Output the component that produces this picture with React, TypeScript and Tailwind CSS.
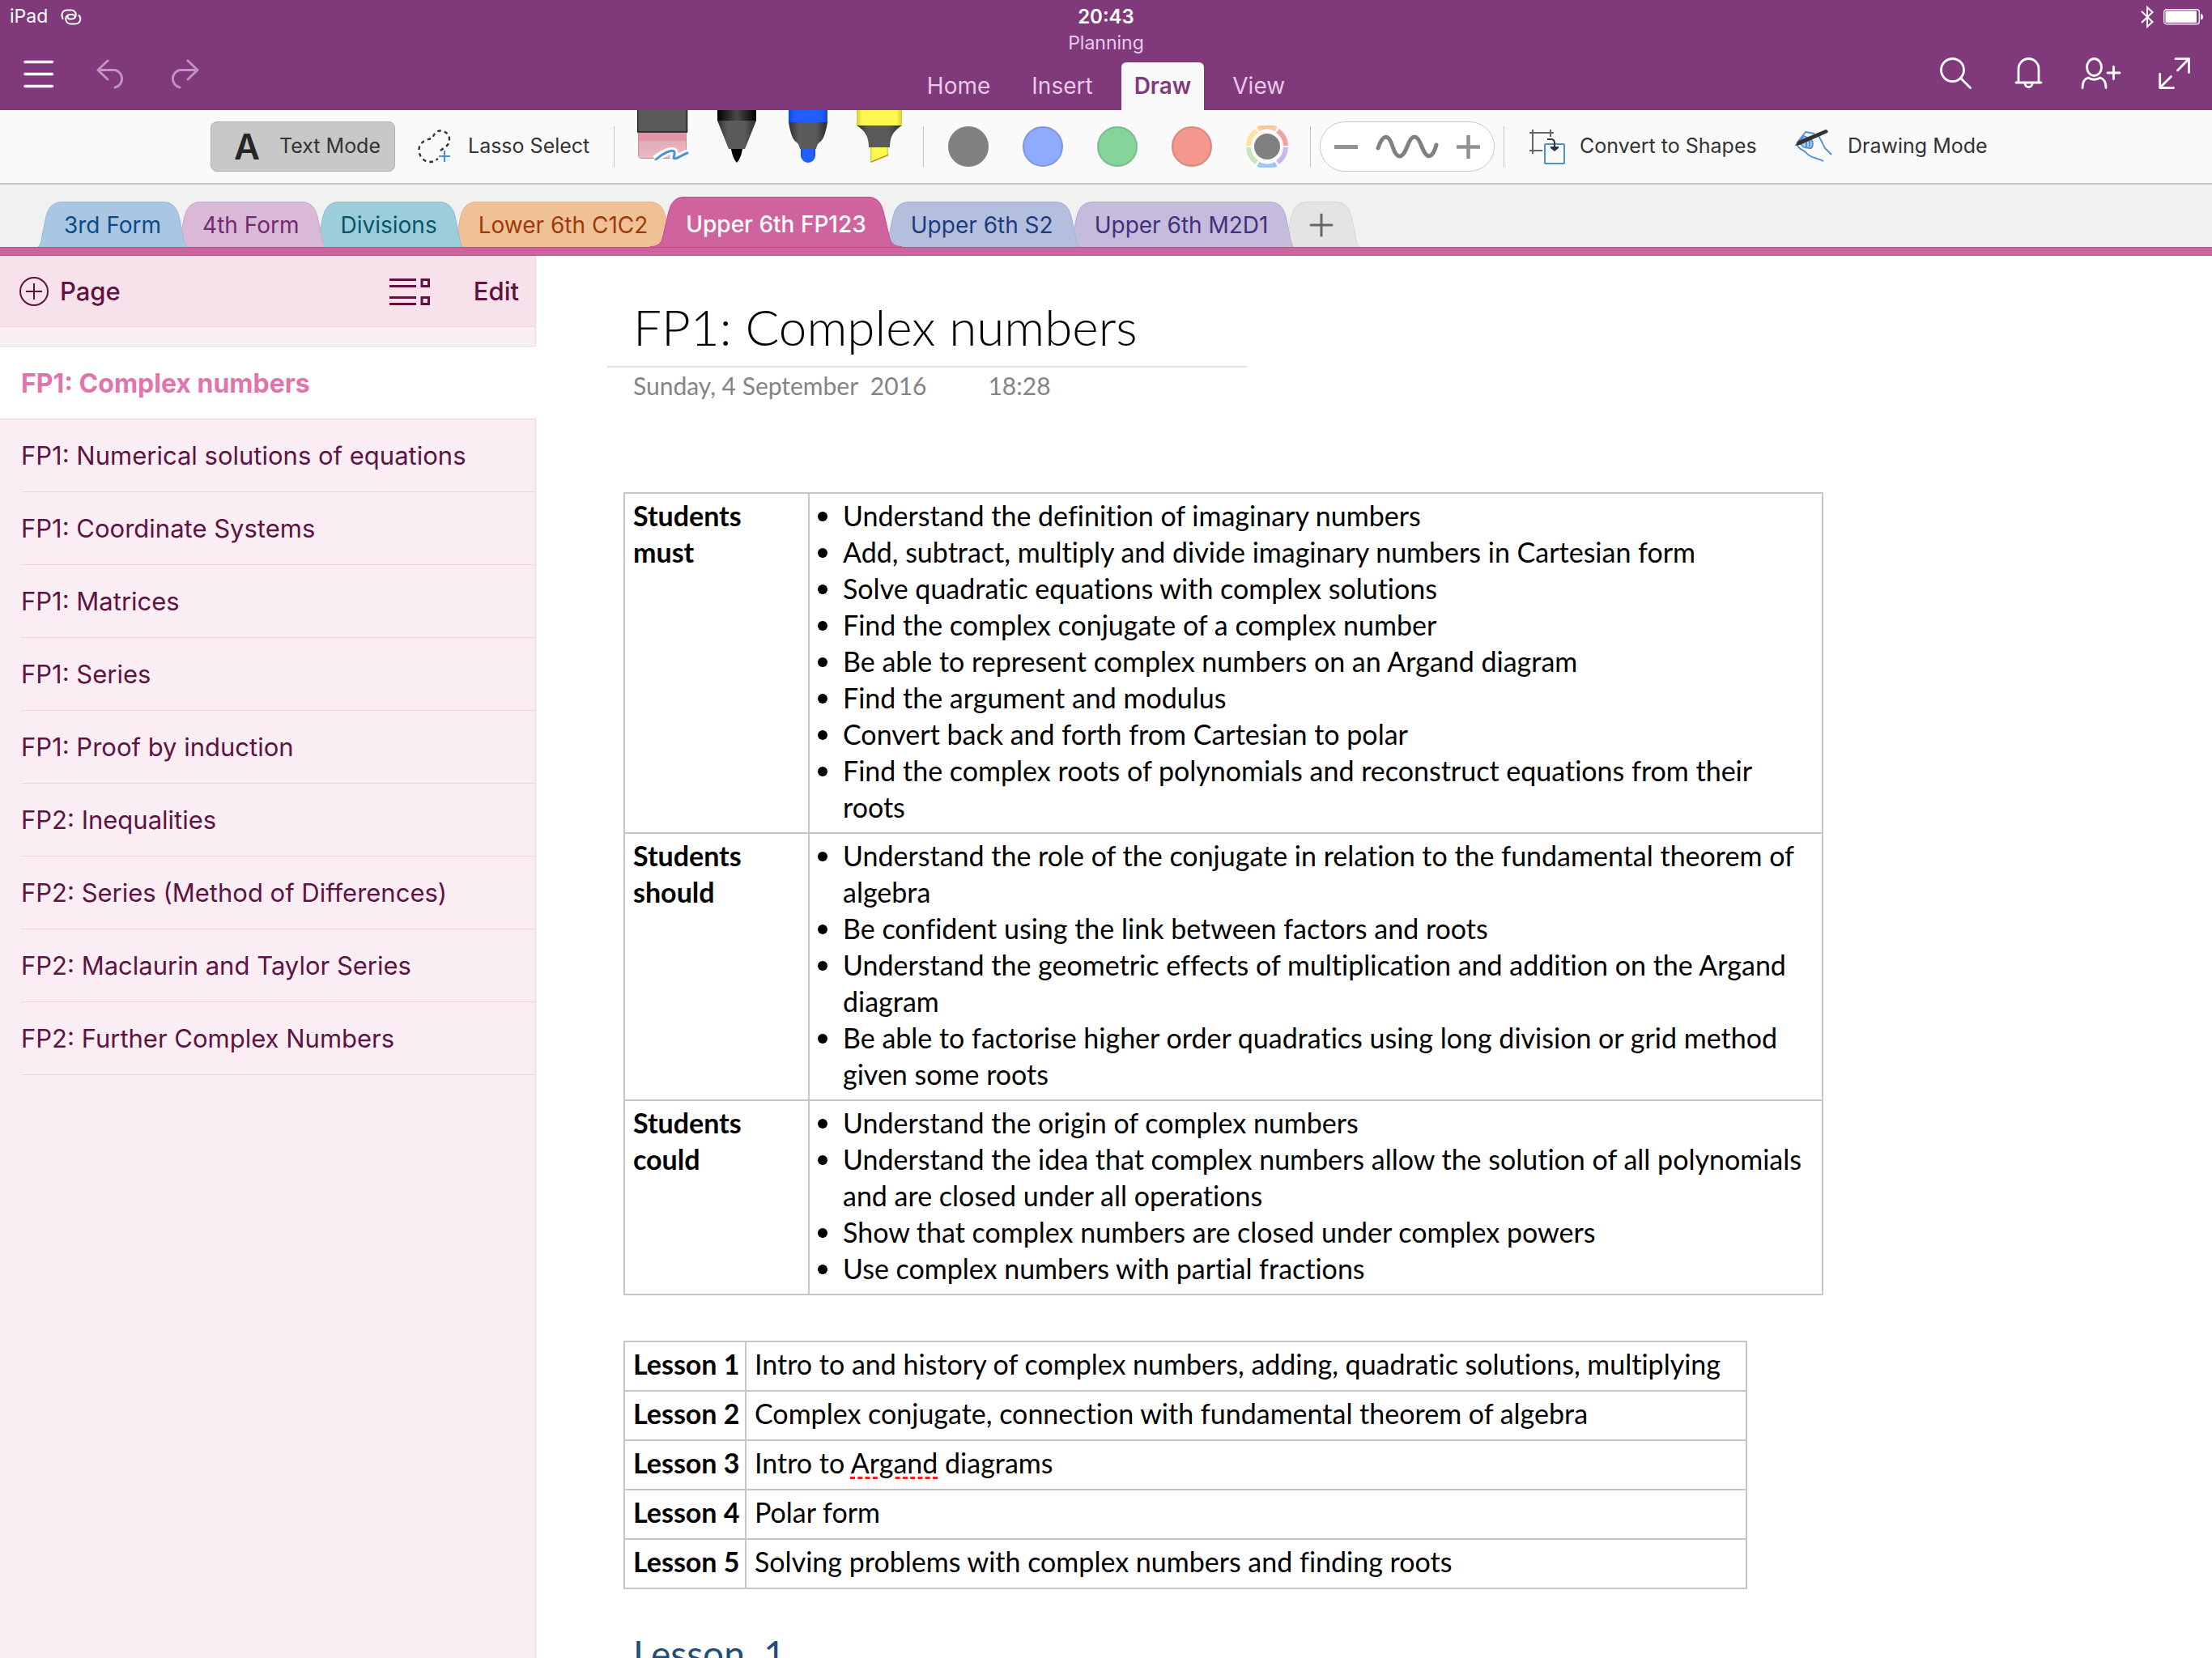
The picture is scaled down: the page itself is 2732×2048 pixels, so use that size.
import React from "react";

const pages = [
  "FP1: Complex numbers",
  "FP1: Numerical solutions of equations",
  "FP1: Coordinate Systems",
  "FP1: Matrices",
  "FP1: Series",
  "FP1: Proof by induction",
  "FP2: Inequalities",
  "FP2: Series (Method of Differences)",
  "FP2: Maclaurin and Taylor Series",
  "FP2: Further Complex Numbers",
];

const objectives = [
  {
    who: "Students must",
    items: [
      "Understand the definition of imaginary numbers",
      "Add, subtract, multiply and divide imaginary numbers in Cartesian form",
      "Solve quadratic equations with complex solutions",
      "Find the complex conjugate of a complex number",
      "Be able to represent complex numbers on an Argand diagram",
      "Find the argument and modulus",
      "Convert back and forth from Cartesian to polar",
      "Find the complex roots of polynomials and reconstruct equations from their roots",
    ],
  },
  {
    who: "Students should",
    items: [
      "Understand the role of the conjugate in relation to the fundamental theorem of algebra",
      "Be confident using the link between factors and roots",
      "Understand the geometric effects of multiplication and addition on the Argand diagram",
      "Be able to factorise higher order quadratics using long division or grid method given some roots",
    ],
  },
  {
    who: "Students could",
    items: [
      "Understand the origin of complex numbers",
      "Understand the idea that complex numbers allow the solution of all polynomials and are closed under all operations",
      "Show that complex numbers are closed under complex powers",
      "Use complex numbers with partial fractions",
    ],
  },
];

const lessons: React.ReactNode[] = [
  "Intro to and history of complex numbers, adding, quadratic solutions, multiplying",
  "Complex conjugate, connection with fundamental theorem of algebra",
  <>
    Intro to{" "}
    <span className="underline decoration-dashed decoration-[#ff1a1a] decoration-[3px] underline-offset-[4px]">Argand</span>{" "}
    diagrams
  </>,
  "Polar form",
  "Solving problems with complex numbers and finding roots",
];

const sections = [
  { name: "3rd Form", body: "bg-[#a9c6e3] border-[#97bde0]", cap: "fill-[#a9c6e3] stroke-[#97bde0]", text: "text-[#0d4a87]", z: "z-[9]" },
  { name: "4th Form", body: "bg-[#d9b8d8] border-[#cfa6ce]", cap: "fill-[#d9b8d8] stroke-[#cfa6ce]", text: "text-[#722a72]", z: "z-[8]" },
  { name: "Divisions", body: "bg-[#9ccdda] border-[#86c2d1]", cap: "fill-[#9ccdda] stroke-[#86c2d1]", text: "text-[#06566b]", z: "z-[7]" },
  { name: "Lower 6th C1C2", body: "bg-[#f0c197] border-[#ebb27e]", cap: "fill-[#f0c197] stroke-[#ebb27e]", text: "text-[#9c3b08]", z: "z-[6]" },
  { name: "Upper 6th FP123", active: true, body: "bg-[#cf639d] border-[#c44a8c]", cap: "fill-[#cf639d] stroke-[#c44a8c]", text: "text-white font-medium", z: "z-20" },
  { name: "Upper 6th S2", body: "bg-[#b4bfde] border-[#a3b3d9]", cap: "fill-[#b4bfde] stroke-[#a3b3d9]", text: "text-[#1f3b7d]", z: "z-[4]" },
  { name: "Upper 6th M2D1", body: "bg-[#c4bbdd] border-[#b7acd7]", cap: "fill-[#c4bbdd] stroke-[#b7acd7]", text: "text-[#432f7a]", z: "z-[3]" },
];

function Cap({ cls, flip, active }: { cls: string; flip?: boolean; active?: boolean }) {
  const side = flip ? "-scale-x-100" : "";
  return active ? (
    <svg viewBox="0 0 44 62" className={`h-[62px] w-11 shrink-0 ${side} ${cls}`} aria-hidden="true">
      <path d="M0 62 C10 62 14 58 16 48 L23 18 Q27 0 42 0 H44 V62 Z" stroke="none" />
      <path d="M0 61.5 C10 61.5 14 58 16 48 L23 18 Q27 0.5 42 0.5 H44" fill="none" />
    </svg>
  ) : (
    <svg viewBox="0 0 32 56" className={`h-14 w-8 shrink-0 ${side} ${cls}`} aria-hidden="true">
      <path d="M0 56 C3 54 4 48 5 42 L10 18 Q14 0 30 0 H32 V56 Z" stroke="none" />
      <path d="M0 56 C3 54 4 48 5 42 L10 18 Q14 0.5 30 0.5 H32" fill="none" />
    </svg>
  );
}

function Divider() {
  return <div className="h-[50px] w-px shrink-0 bg-[#c4c4c4]" />;
}

const swatches = [
  { name: "Grey", cls: "bg-[#808080] border-[#808080]" },
  { name: "Blue", cls: "bg-[#8eabfd] border-[#7f98dd]" },
  { name: "Green", cls: "bg-[#86d499] border-[#78bd89]" },
  { name: "Red", cls: "bg-[#f4978c] border-[#d8877e]" },
];

function Header() {
  return (
    <header className="grid h-[136px] shrink-0 grid-cols-[1fr_auto_1fr] bg-[#80397b] text-white">
      <div>
        <div className="flex h-10 items-center gap-4 pt-px pl-3 text-[23px]">
          <span>iPad</span>
          <svg viewBox="0 0 26 20" className="h-5 w-[26px]" fill="none" stroke="currentColor" strokeWidth="2" strokeLinecap="round" aria-hidden="true">
            <path d="M2.500 12 C0 7 2 1.500 8 1.500 H13 C20 1.500 21 12.500 13.500 12.500 H11 C9 12.500 8 10.500 9 8.500" />
            <path d="M22.500 8 C26 12 24 18.500 18 18.500 H12 C5 18.500 4 7 11.500 7 H14 C17 7 18 9 17 11" />
          </svg>
        </div>
        <div className="flex h-24 items-center gap-[52px] pt-2 pl-[29px]">
          <button aria-label="Notebooks">
            <svg viewBox="0 0 38 36" className="h-9 w-[38px]" stroke="currentColor" strokeWidth="3.4" strokeLinecap="round">
              <path d="M2 2.500H35.500M2 17.500H35.500M2 32.500H35.500" />
            </svg>
          </button>
          <button aria-label="Undo" className="text-[#bf95bb]">
            <svg viewBox="0 2 38 38" className="h-[38px] w-[38px]" fill="none" stroke="currentColor" strokeWidth="3" strokeLinecap="round" strokeLinejoin="round">
              <path d="M14 4 L2 15.500 L14 27 M2 15.500 H23 A11 11 0 0 1 23 37" />
            </svg>
          </button>
          <button aria-label="Redo" className="text-[#bf95bb]">
            <svg viewBox="0 2 38 38" className="h-[38px] w-[38px]" fill="none" stroke="currentColor" strokeWidth="3" strokeLinecap="round" strokeLinejoin="round">
              <path d="M23 4 L35 15.500 L23 27 M35 15.500 H13 A11 11 0 0 0 13 37" />
            </svg>
          </button>
        </div>
      </div>

      <div className="flex flex-col items-center">
        <div className="flex h-10 items-center pt-px text-2xl font-semibold">20:43</div>
        <div className="h-[37px] text-[23px] leading-[26px] text-[#eac9e8]">Planning</div>
        <nav className="flex h-[59px] gap-[19px] text-[28px] text-[#eac9e8]">
          <button className="px-4 pb-[2px]">Home</button>
          <button className="px-4 pb-[2px]">Insert</button>
          <button className="rounded-t-md bg-[#fafafa] px-4 pb-[2px] font-semibold text-[#80397b]">Draw</button>
          <button className="px-4 pb-[2px]">View</button>
        </nav>
      </div>

      <div>
        <div className="flex h-10 items-center justify-end gap-3 pt-px pr-[10px]">
          <svg viewBox="0 0 16 28" className="h-7 w-4" fill="none" stroke="currentColor" strokeWidth="2" aria-label="Bluetooth">
            <path d="M1 7 L14.500 20 L8 26 V2 L14.500 8 L1 21" />
          </svg>
          <svg viewBox="0 0 50 20" className="h-5 w-[50px]" aria-label="Battery">
            <rect x="0.750" y="0.750" width="43.500" height="18" rx="3" fill="none" stroke="currentColor" strokeWidth="1.300" />
            <rect x="2.500" y="2.500" width="38.500" height="14.500" rx="1" fill="currentColor" />
            <path d="M46 6 Q49 6.500 49 10 Q49 13 46 13.500 Z" fill="currentColor" />
          </svg>
        </div>
        <div className="flex h-24 items-center justify-end gap-10 pt-1 pr-[22px]">
          <button aria-label="Search" className="flex w-[50px] justify-center">
            <svg viewBox="0 0 39 39" className="h-[39px] w-[39px]" fill="none" stroke="currentColor" strokeWidth="2.800" strokeLinecap="round">
              <circle cx="15.500" cy="15.500" r="14" />
              <path d="M25.500 25.500 L37.500 37.500" />
            </svg>
          </button>
          <button aria-label="Notifications" className="flex w-[50px] justify-center">
            <svg viewBox="0 0 35 39" className="h-[39px] w-[35px]" fill="none" stroke="currentColor" strokeWidth="2.800" strokeLinecap="round">
              <path d="M2 31 H33 M5 31 V14 A12.500 12.500 0 0 1 30 14 V31 M13 32 A4.500 4.500 0 0 0 22 32" />
            </svg>
          </button>
          <button aria-label="Share" className="flex w-[50px] justify-center">
            <svg viewBox="0 0 50 39" className="h-[39px] w-[50px]" fill="none" stroke="currentColor" strokeWidth="2.800" strokeLinecap="round" strokeLinejoin="round">
              <ellipse cx="16.500" cy="12" rx="9" ry="10.500" />
              <path d="M2 37.500 C2 28 6 26 9 25 Q16.500 29.500 24 25 C27 26 31 28 31 37.500 M33 19 H48 M40.500 11.500 V26.500" />
            </svg>
          </button>
          <button aria-label="Full screen" className="flex w-[50px] justify-center">
            <svg viewBox="0 0 39 39" className="h-[39px] w-[39px]" fill="none" stroke="currentColor" strokeWidth="2.800" strokeLinecap="round" strokeLinejoin="round">
              <path d="M21 1.700 H37.500 V18.500 M37 2 L23.500 16 M1.700 20.500 V37.500 H18.500 M2 37 L15.500 23.500" />
            </svg>
          </button>
        </div>
      </div>
    </header>
  );
}

function Pens() {
  return (
    <div className="flex w-[381px] shrink-0 items-start self-stretch pl-7">
      <svg width="0" height="0" className="absolute" aria-hidden="true">
        <defs>
          <linearGradient id="barrel">
            <stop offset="0" stopColor="#000" />
            <stop offset="0.500" stopColor="#4a4a4a" />
            <stop offset="1" stopColor="#000" />
          </linearGradient>
          <linearGradient id="cone">
            <stop offset="0" stopColor="#2e2e2e" />
            <stop offset="0.250" stopColor="#5a5a5a" />
            <stop offset="0.700" stopColor="#5a5a5a" />
            <stop offset="1" stopColor="#2a2a2a" />
          </linearGradient>
          <linearGradient id="blueInk">
            <stop offset="0" stopColor="#1247d0" />
            <stop offset="0.150" stopColor="#1f5fff" />
            <stop offset="0.850" stopColor="#1f5fff" />
            <stop offset="1" stopColor="#1247d0" />
          </linearGradient>
          <linearGradient id="yellowInk">
            <stop offset="0" stopColor="#d3cb37" />
            <stop offset="0.120" stopColor="#fff851" />
            <stop offset="0.880" stopColor="#fff851" />
            <stop offset="1" stopColor="#d3cb37" />
          </linearGradient>
          <linearGradient id="rubber" x1="0" y1="0" x2="0" y2="1">
            <stop offset="0" stopColor="#e3a3b2" />
            <stop offset="1" stopColor="#e9bac7" />
          </linearGradient>
        </defs>
      </svg>
      <button aria-label="Eraser">
        <svg viewBox="0 0 64 66" className="h-[66px] w-16">
          <path d="M1.500 27 H60.500 V56 Q60.500 59.500 57 59.500 H5 Q1.500 59.500 1.500 55 Z" fill="url(#rubber)" stroke="#c98e9d" />
          <path d="M2 27 H60 V38 H2 Z" fill="#e195a7" />
          <rect x="0.500" y="-2" width="61" height="29" fill="#595959" stroke="#1e1e1e" strokeWidth="1.500" />
          <path d="M22 60.500 C32 53 45 47 46 52 C47 57 42 61 48 59 C53 58 56 55 62 53" fill="none" stroke="#fafafa" strokeWidth="9" />
          <path d="M23 61 C32 53 45 47 46 52 C47 57 42 61 48 59.500 C53 58 56 55 62 53" fill="none" stroke="#4b8fd4" strokeWidth="3" strokeLinecap="round" />
        </svg>
      </button>
      <button aria-label="Pen" className="ml-[35px]">
        <svg viewBox="0 0 48 66" className="h-[66px] w-12">
          <rect width="48" height="13" fill="url(#barrel)" />
          <path d="M0 13 H48 L34 48 H14 Z" fill="url(#cone)" />
          <path d="M17 48 H31 Q29 60 24 65 Q19 60 17 48 Z" fill="#000" />
        </svg>
      </button>
      <button aria-label="Marker" className="ml-10">
        <svg viewBox="0 0 48 66" className="h-[66px] w-12">
          <rect width="48" height="15" fill="url(#blueInk)" />
          <path d="M15 48 H33 V56 A9 9 0 0 1 15 56 Z" fill="url(#blueInk)" />
          <path d="M0 15 H48 C46 28 43 37 38 40 Q35 42 34 48 H14 Q13 42 10 40 C5 37 2 28 0 15 Z" fill="url(#cone)" />
        </svg>
      </button>
      <button aria-label="Highlighter" className="ml-9">
        <svg viewBox="0 0 56 66" className="h-[66px] w-14">
          <rect width="56" height="19" fill="url(#yellowInk)" />
          <path d="M17 46 H39 V56 L17 65 Z" fill="url(#yellowInk)" />
          <path d="M18 64 L39 55.500" stroke="#a39d2b" strokeWidth="1.500" />
          <path d="M0 19 H56 C44 26 41 35 41 46 H15 C15 35 12 26 0 19 Z" fill="url(#cone)" />
        </svg>
      </button>
    </div>
  );
}

function Ribbon() {
  return (
    <div className="flex h-[92px] shrink-0 items-center justify-center border-b-2 border-[#c8c8c8] bg-[#fafafa] text-[25px] text-[#333]">
      <button className="flex h-[62px] w-[228px] shrink-0 items-center rounded-lg border border-[#b0b0b0] bg-[#c8c8c8] pl-7">
        <span className="w-[56px] text-left text-[44px] leading-none font-semibold text-[#262626]">A</span>
        Text Mode
      </button>
      <button className="flex h-[62px] w-[270px] shrink-0 items-center gap-5 pl-7">
        <svg viewBox="0 0 42 42" className="h-[42px] w-[42px]" fill="none">
          <path
            d="M28 26 C34 21 39 20 39 12 C39 5 33 1.500 28 1.500 C22 1.500 20 6 18 11 C10 12 1.500 16 1.500 25 C1.500 33 7 40 15 40 C20 40 22 38 25 36"
            stroke="#333"
            strokeWidth="2.400"
            strokeDasharray="4.500 4.200"
          />
          <path d="M33 26 V40 M26 33 H40" stroke="#4b8fd4" strokeWidth="2.200" />
        </svg>
        Lasso Select
      </button>
      <Divider />
      <Pens />
      <Divider />
      <div className="flex w-[477px] shrink-0 items-center gap-[42px] pl-[30px]">
        {swatches.map((s) => (
          <button key={s.name} aria-label={s.name} className={`h-[50px] w-[50px] rounded-full border-2 ${s.cls}`} />
        ))}
        <button aria-label="More colours">
          <svg viewBox="0 0 52 52" className="h-[52px] w-[52px]" fill="none" strokeWidth="6">
            <path d="M14.900 4.400 A23 23 0 0 1 37.100 4.400" stroke="#fdc79a" />
            <path d="M39 6.500 A23.300 23.300 0 0 1 49 25" stroke="#f4a0a0" />
            <path d="M49 27 A23.300 23.300 0 0 1 39 45.500" stroke="#c8b6ee" />
            <path d="M37.100 47.600 A23 23 0 0 1 14.900 47.600" stroke="#9cc6f3" />
            <path d="M13 45.500 A23.300 23.300 0 0 1 3 27" stroke="#c8e4b8" />
            <path d="M3 25 A23.300 23.300 0 0 1 13 6.500" stroke="#fde49c" />
            <circle cx="26" cy="26" r="16" fill="#808080" />
          </svg>
        </button>
      </div>
      <Divider />
      <div className="mx-[11px] flex h-[62px] w-[216px] shrink-0 items-center justify-between rounded-full border border-[#c8c8c8] bg-white px-[17px] text-[#808080]">
        <button aria-label="Thinner">
          <svg viewBox="0 0 29 29" className="h-[29px] w-[29px]" stroke="#919191" strokeWidth="5">
            <path d="M0 14.500 H29" />
          </svg>
        </button>
        <svg viewBox="0 0 78 30" className="h-[30px] w-[78px]" fill="none" stroke="currentColor" strokeWidth="5" strokeLinecap="round">
          <path d="M3 17 C9 -1 16 -1 21 15 S33 31 39 15 S51 -1 57 15 S70 31 75 13" />
        </svg>
        <button aria-label="Thicker">
          <svg viewBox="0 0 29 29" className="h-[29px] w-[29px]" stroke="#919191" strokeWidth="4.500">
            <path d="M0 14.500 H29 M14.500 0 V29" />
          </svg>
        </button>
      </div>
      <Divider />
      <button className="flex h-[62px] w-[342px] shrink-0 items-center gap-[18px] pl-[30px]">
        <svg viewBox="0 0 45 45" className="h-[45px] w-[45px]" fill="none">
          <path d="M5 1 V31 M1 5 H31 M27 1 V10 M1 27 H17" stroke="#666" strokeWidth="2" />
          <rect x="20" y="19" width="24" height="24" rx="1" stroke="#4b8fd4" strokeWidth="2" />
          <path d="M23 13 H28 Q32 13 32 18 V24" stroke="#333" strokeWidth="2" />
          <path d="M27 22 H37 V24 L32 28 L27 24 Z" fill="#333" />
        </svg>
        Convert to Shapes
      </button>
      <button className="flex h-[62px] w-[272px] shrink-0 items-center gap-[18px] pl-4">
        <svg viewBox="0 0 48 48" className="h-12 w-12" fill="none" stroke="#4b8fd4" strokeWidth="1.800" strokeLinejoin="round">
          <path d="M3 20 L14 6 L25 8 M29 10 C33 14 36 23 38 26 L46 34" />
          <path d="M4 22 C5 28 11 27 15 32 C20 38 28 38 36 42" />
          <path d="M7 17 C8 25 14 26 21 26 Q25 22 21 15 L12 11 Z" fill="#a9cdf2" />
          <path d="M15 25 V16 M19 24 V17" />
          <path d="M1 23 L5 17 L39 3 Q43 4 41 7 L7 22 Z" fill="#333" stroke="none" />
        </svg>
        Drawing Mode
      </button>
    </div>
  );
}

function SectionTabs() {
  return (
    <div className="shrink-0 bg-[#f1f1f1]">
      <div className="flex h-[77px] items-end pl-[47px]">
        {sections.map((s) => (
          <button
            key={s.name}
            className={`relative flex items-end text-[28px] ${s.z} ${s.text} ${s.active ? "-mr-[21px] -ml-4" : "-mr-[13px]"}`}
          >
            <Cap cls={s.cap} active={s.active} />
            <span className={`flex items-center border-t whitespace-nowrap ${s.body} ${s.active ? "h-[62px] pt-[5px]" : "h-14"}`}>{s.name}</span>
            <Cap cls={s.cap} flip active={s.active} />
          </button>
        ))}
        <button aria-label="New section" className="relative flex items-end">
          <Cap cls="fill-[#e4e4e4] stroke-[#d6d6d6]" />
          <span className="flex h-14 w-[30px] items-center justify-center border-t border-[#d6d6d6] bg-[#e4e4e4]">
            <svg viewBox="0 0 30 30" className="z-10 h-[30px] w-[30px] shrink-0" stroke="#666" strokeWidth="3" strokeLinecap="round">
              <path d="M2 15 H28 M15 2 V28" />
            </svg>
          </span>
          <Cap cls="fill-[#e4e4e4] stroke-[#d6d6d6]" flip />
        </button>
      </div>
      <div className="h-[11px] border-y border-[#c44a8c] bg-[#cf639d]" />
    </div>
  );
}

function Sidebar() {
  return (
    <aside className="flex w-[662px] shrink-0 flex-col bg-[#faedf4] text-[#5e1342]">
      <div className="flex h-[88px] shrink-0 items-center border-r border-b border-[#f2d3e0] bg-[#f7e2ec] pt-px pr-5 pl-[23px] text-[31px] font-medium">
        <button className="flex items-center gap-[13px]">
          <svg viewBox="0 0 38 38" className="h-[38px] w-[38px]" fill="none" stroke="currentColor" strokeWidth="2">
            <circle cx="19" cy="19" r="17" />
            <path d="M19 9 V29 M9 19 H29" />
          </svg>
          Page
        </button>
        <button aria-label="Page list view" className="mr-[54px] ml-auto">
          <svg viewBox="0 0 50 34" className="h-[34px] w-[50px]" fill="none" stroke="currentColor" strokeWidth="3">
            <path d="M0 2.500 H33 M0 10.500 H33 M0 24.500 H33 M0 32.500 H33" />
            <rect x="40" y="2.500" width="8.500" height="8" />
            <rect x="40" y="24.500" width="8.500" height="8" />
          </svg>
        </button>
        <button>Edit</button>
      </div>
      <div className="h-6 shrink-0 border-r border-b border-[#f2d3e0]" />
      <ul className="text-[31px]">
        {pages.map((p, i) =>
          i === 0 ? (
            <li key={p} className="border-b border-[#f2d3e0] bg-white pl-[26px]">
              <button aria-current="page" className="flex h-[89px] w-full items-center pt-[2px] text-[32px] font-bold text-[#e075ae]">
                {p}
              </button>
            </li>
          ) : (
            <li key={p} className="border-r border-[#f2d3e0] pl-[26px]">
              <button className="flex h-[90px] w-full items-center border-b border-[#f2d3e0] pt-[2px]">{p}</button>
            </li>
          )
        )}
      </ul>
      <div className="grow border-r border-[#f2d3e0]" />
    </aside>
  );
}

function Note() {
  return (
    <main className="min-w-0 grow overflow-hidden bg-white pl-[88px] font-['Lato',sans-serif] text-black [font-variant-ligatures:none]">
      <div className="w-[790px] border-b-2 border-[#e0e0e0] pt-[48px] pl-8">
        <h1 className="h-[88px] text-[62px] leading-[78px] font-light whitespace-nowrap">FP1: Complex numbers</h1>
      </div>
      <p className="flex gap-[76px] pl-8 text-[30px] leading-[44px] text-[#848484]">
        <span className="whitespace-pre">Sunday, 4 September  2016</span>
        <span>18:28</span>
      </p>
      <table className="mt-[110px] ml-5 w-[1482px] border-collapse text-[34px] leading-[45px]">
        <tbody>
          {objectives.map((o) => (
            <tr key={o.who} className="align-top">
              <th scope="row" className="w-[228px] border-2 border-[#c6c6c6] px-[10px] pt-1 pb-[9px] text-left font-bold">
                {o.who}
              </th>
              <td className="border-2 border-[#c6c6c6] pt-1 pr-1 pb-[9px] pl-[10px]">
                <ul>
                  {o.items.map((t) => (
                    <li key={t} className="flex">
                      <span className="mt-[18px] mr-[19px] h-3 w-3 shrink-0 rounded-full bg-black" />
                      <span>{t}</span>
                    </li>
                  ))}
                </ul>
              </td>
            </tr>
          ))}
        </tbody>
      </table>
      <table className="mt-[56px] ml-5 w-[1388px] border-collapse text-[34px] leading-[45px]">
        <tbody>
          {lessons.map((l, i) => (
            <tr key={i} className="h-[61px] align-top">
              <th scope="row" className="w-[150px] border-2 border-[#c6c6c6] pt-1 pl-[10px] text-left font-bold whitespace-nowrap">
                Lesson {i + 1}
              </th>
              <td className="border-2 border-[#c6c6c6] pt-1 pl-[10px] whitespace-nowrap">{l}</td>
            </tr>
          ))}
        </tbody>
      </table>
      <h2 className="mt-[52px] ml-8 text-[46px] leading-[56px] whitespace-pre text-[#1f4e79]">Lesson  1</h2>
    </main>
  );
}

export default function App() {
  return (
    <div className="flex h-screen flex-col overflow-hidden bg-white font-['Inter',sans-serif]">
      <Header />
      <Ribbon />
      <SectionTabs />
      <div className="flex min-h-0 grow">
        <Sidebar />
        <Note />
      </div>
    </div>
  );
}
